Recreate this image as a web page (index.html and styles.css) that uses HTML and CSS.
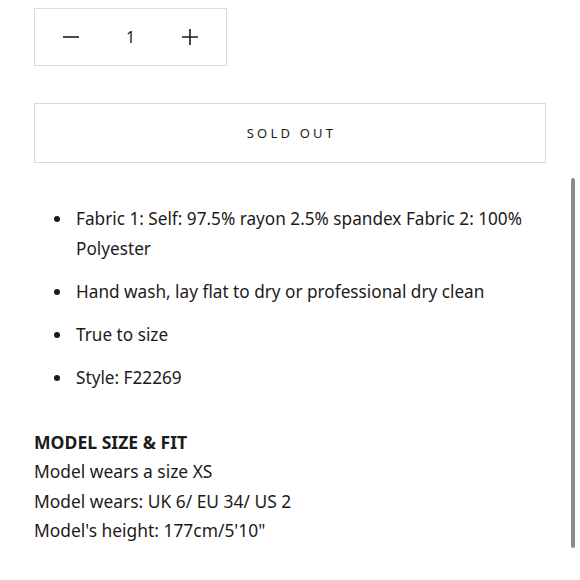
FILE: index.html
```html
<!DOCTYPE html>
<html>
<head>
<meta charset="utf-8">
<link rel="stylesheet" href="styles.css">
</head>
<body>
<div class="page">
  <div class="qty">
    <button class="qty-btn" aria-label="Decrease">
      <svg width="16" height="16" viewBox="0 0 16 16"><path d="M0 8H16" stroke="#1c1b1b" stroke-width="1.6"/></svg>
    </button>
    <span class="qty-val">1</span>
    <button class="qty-btn" aria-label="Increase">
      <svg width="16" height="16" viewBox="0 0 16 16"><path d="M0 8H16M8 0V16" stroke="#1c1b1b" stroke-width="1.6"/></svg>
    </button>
  </div>
  <button class="sold">SOLD OUT</button>
  <ul class="details">
    <li>Fabric 1: Self: 97.5% rayon 2.5% spandex Fabric 2: 100% Polyester</li>
    <li>Hand wash, lay flat to dry or professional dry clean</li>
    <li>True to size</li>
    <li>Style: F22269</li>
  </ul>
  <div class="fit">
    <p class="fit-title">MODEL SIZE &amp; FIT</p>
    <p>Model wears a size XS</p>
    <p>Model wears: UK 6/ EU 34/ US 2</p>
    <p>Model's height: 177cm/5'10"</p>
  </div>
</div>
<div class="scrollbar"></div>
</body>
</html>
```
FILE: styles.css
```css
html, body {
  margin: 0;
  padding: 0;
  background: #fff;
}
body {
  font-family: "Noto Sans", "Open Sans", sans-serif;
  color: #1c1b1b;
  width: 580px;
  height: 580px;
  overflow: hidden;
  position: relative;
}
.page {
  padding: 8px 34px 0 34px;
}
.qty {
  width: 193px;
  height: 58px;
  box-sizing: border-box;
  border: 1px solid #dcdcdc;
  display: flex;
  align-items: center;
  justify-content: space-between;
  padding: 0 28px;
}
.qty-btn {
  background: none;
  border: 0;
  padding: 0;
  width: 16px;
  height: 16px;
  display: flex;
}
.qty-val {
  font-size: 16px;
  line-height: 1;
}
.sold {
  display: block;
  margin-top: 37px;
  width: 512px;
  height: 60px;
  box-sizing: border-box;
  border: 1px solid #d8d8d8;
  background: #fff;
  font-family: "Noto Sans", sans-serif;
  font-size: 13px;
  letter-spacing: 3.2px;
  color: #1c1b1b;
  padding: 0 0 0 3px;
}
.details {
  margin: 41px 0 0 0;
  padding: 0 0 0 42px;
  list-style: none;
  font-size: 17.2px;
  line-height: 30px;
}
.details li {
  margin-bottom: 13px;
  position: relative;
}
.details li::before {
  content: "";
  position: absolute;
  left: -22px;
  top: 12px;
  width: 6px;
  height: 6px;
  border-radius: 50%;
  background: #1c1b1b;
}
.fit {
  margin-top: 35px;
  font-size: 17.4px;
  line-height: 29.3px;
}
.fit p {
  margin: 0;
}
.fit-title {
  font-weight: 700;
  font-size: 17.6px;
}
.scrollbar {
  position: absolute;
  left: 571px;
  top: 178px;
  width: 4px;
  height: 370px;
  border-radius: 2px;
  background: #8a8a8a;
}
```
